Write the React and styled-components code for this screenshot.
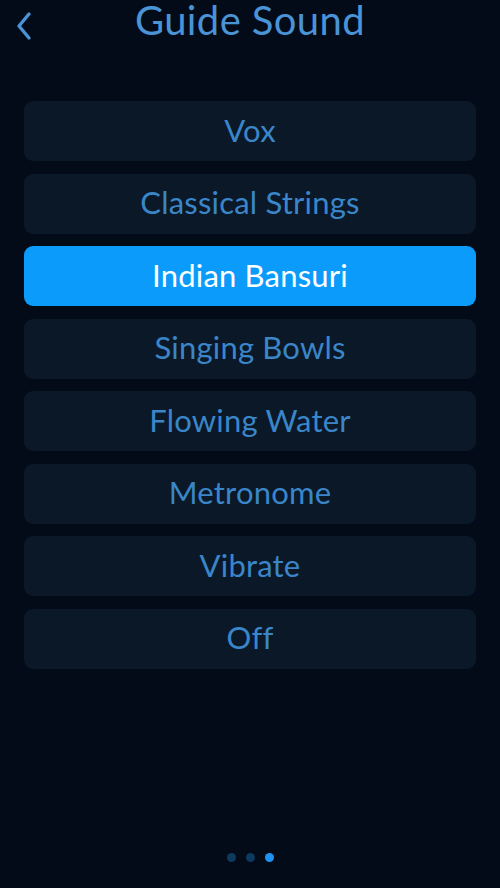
import React from "react";
import styled, { createGlobalStyle } from "styled-components";

const Global = createGlobalStyle`
  html, body { margin: 0; padding: 0; background: #030b18; }
  body { font-family: "Lato", "Noto Sans", sans-serif; }
`;

const Screen = styled.div`
  width: 500px;
  height: 888px;
  background: #030b18;
  display: flex;
  flex-direction: column;
  position: relative;
  overflow: hidden;
`;

const Header = styled.div`
  height: 44px;
  display: flex;
  align-items: flex-start;
  justify-content: center;
  position: relative;
`;

const Back = styled.button`
  position: absolute;
  left: 10px;
  top: 9px;
  width: 28px;
  height: 34px;
  background: none;
  border: none;
  padding: 0;
  display: flex;
  align-items: center;
  justify-content: center;
`;

const Title = styled.h1`
  margin: 0;
  font-family: "Lato", sans-serif;
  font-weight: 400;
  font-size: 40px;
  line-height: 40px;
  letter-spacing: 0.4px;
  color: #4a93d6;
`;

const List = styled.div`
  display: flex;
  flex-direction: column;
  gap: 12.5px;
  padding: 57px 24px 0;
`;

const Row = styled.div`
  height: 60px;
  box-sizing: border-box;
  padding-bottom: 3px;
  border-radius: 9px;
  background: ${(p) => (p.$active ? "#0a9bfb" : "#0a1828")};
  color: ${(p) => (p.$active ? "#ffffff" : "#3a86c8")};
  display: flex;
  align-items: center;
  justify-content: center;
  font-size: 31px;
  line-height: 36px;
  letter-spacing: 0.2px;
`;

const Dots = styled.div`
  position: absolute;
  bottom: 26px;
  left: 0;
  right: 0;
  display: flex;
  justify-content: center;
  gap: 10px;
`;

const Dot = styled.span`
  width: 9px;
  height: 9px;
  border-radius: 50%;
  background: ${(p) => (p.$active ? "#1e92f2" : "#0d3a5e")};
`;

const items = [
  "Vox",
  "Classical Strings",
  "Indian Bansuri",
  "Singing Bowls",
  "Flowing Water",
  "Metronome",
  "Vibrate",
  "Off",
];

export default function App() {
  return (
    <Screen>
      <Global />
      <Header>
        <Back aria-label="Back">
          <svg width="20" height="30" viewBox="0 0 20 30">
            <path d="M15 3 L5 15 L15 27" fill="none" stroke="#4a93d6" strokeWidth="3.4" strokeLinecap="round" strokeLinejoin="round" />
          </svg>
        </Back>
        <Title>Guide Sound</Title>
      </Header>
      <List>
        {items.map((it) => (
          <Row key={it} $active={it === "Indian Bansuri"}>
            {it}
          </Row>
        ))}
      </List>
      <Dots>
        <Dot />
        <Dot />
        <Dot $active />
      </Dots>
    </Screen>
  );
}
